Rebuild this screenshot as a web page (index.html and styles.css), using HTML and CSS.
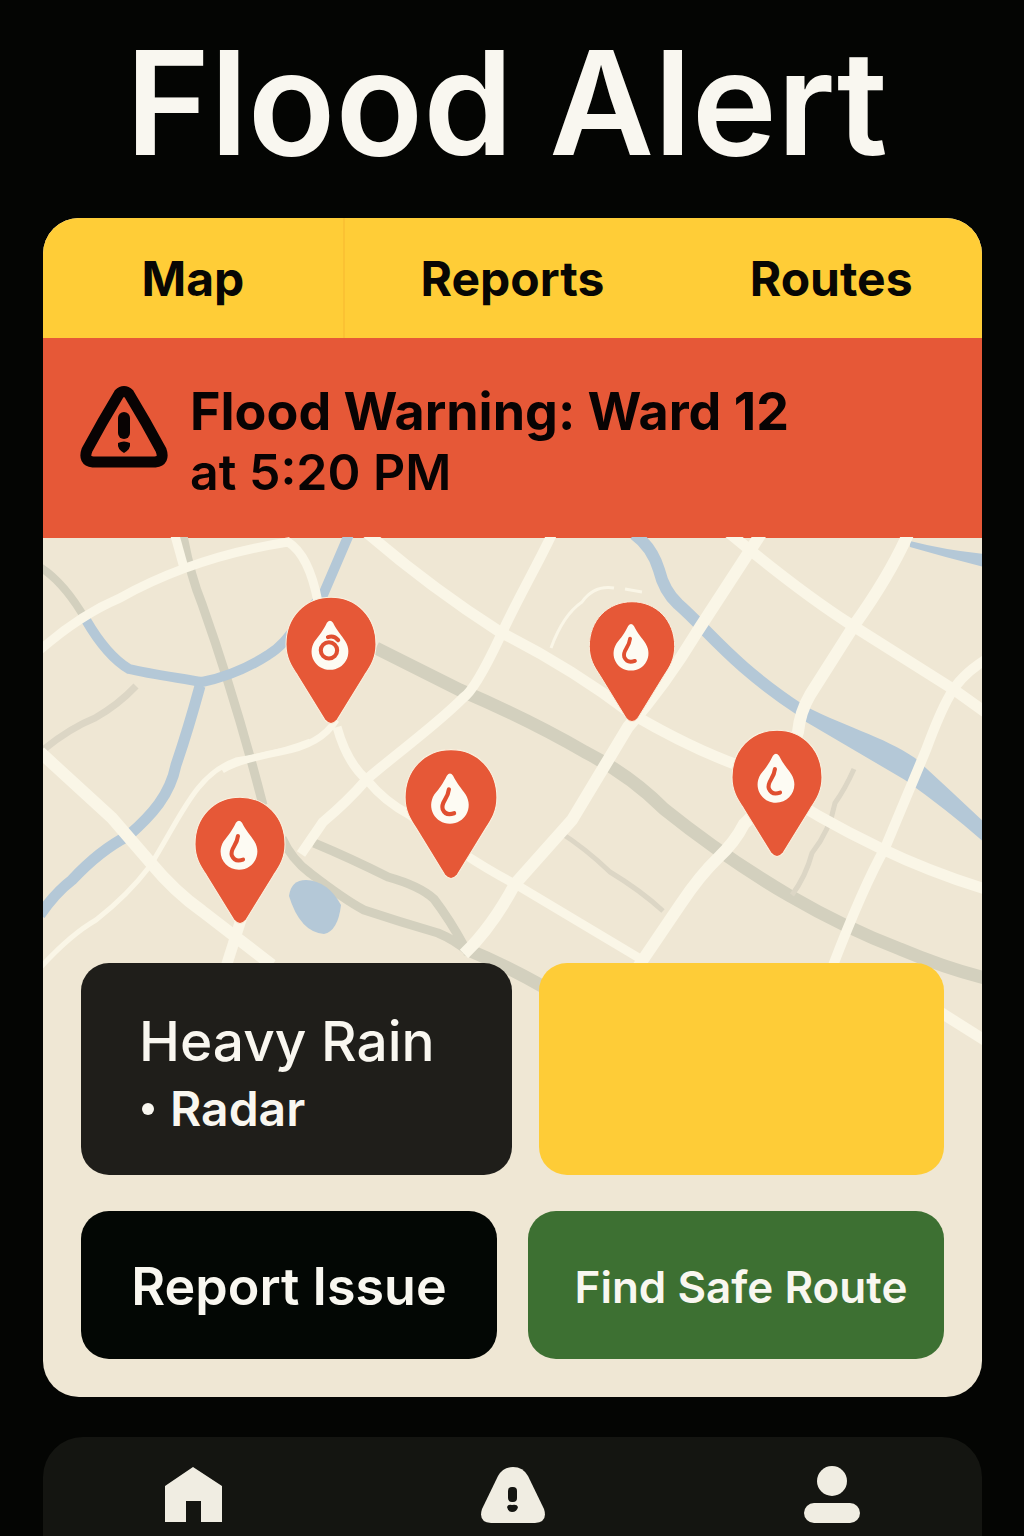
FILE: index.html
```html
<!DOCTYPE html>
<html lang="en">
<head>
<meta charset="utf-8">
<meta name="viewport" content="width=device-width, initial-scale=1">
<title>Flood Alert</title>
<link rel="stylesheet" href="styles.css">
</head>
<body>
<svg class="symbols" aria-hidden="true">
  <symbol id="pin" viewBox="0 0 90 126">
    <path class="pin-body" d="M45 1C20 1 1 20 1 47C1 60 6 68 12 77L39 121Q45 128 51 121L78 77C84 68 89 60 89 47C89 20 70 1 45 1Z"/>
    <path class="pin-drop" d="M41 26Q44 22 47 26C51 34 55 38 59 44C67 57 58 72 44 72C30 72 21 57 29 44C34 38 37 34 41 26Z"/>
  </symbol>
</svg>
<div class="app">
  <h1 class="title">Flood Alert</h1>
  <main class="card">
    <nav class="tabs" aria-label="Sections">
      <a class="tab" href="#map">Map</a>
      <a class="tab" href="#reports">Reports</a>
      <a class="tab" href="#routes">Routes</a>
    </nav>
    <section class="banner" role="alert">
      <svg class="banner-icon" viewBox="0 0 88 82" aria-hidden="true">
        <path fill="none" stroke="currentColor" stroke-width="11" stroke-linejoin="round" d="M39 8Q44 3 49 8Q66 36 81 64Q85 75 75 76H13Q3 75 7 64Q22 36 39 8Z"/>
        <rect x="38" y="26" width="12" height="27" rx="6" fill="currentColor"/>
        <path fill="currentColor" d="M38 57Q44 54 50 57Q51 63 44 67Q37 63 38 57Z"/>
      </svg>
      <div>
        <h2 class="banner-title">Flood Warning: Ward 12</h2>
        <p class="banner-time">at 5:20 PM</p>
      </div>
    </section>
    <section class="scene" id="map">
      <svg class="streets" viewBox="43 537 939 861" preserveAspectRatio="xMidYMin slice" aria-hidden="true">
        <g class="rail">
          <path stroke-width="9" d="M182 530Q190 575 202 604Q236 700 263 805"/>
          <path stroke-width="8" d="M40 567Q64 582 86 620"/>
          <path class="faint" stroke-width="7" d="M43 750Q70 728 95 718Q118 705 136 686"/>
          <path stroke-width="13" d="M376 648Q410 665 460 690Q530 720 585 752Q630 775 664 809Q725 858 790 896Q845 928 900 949Q945 968 985 978"/>
          <path stroke-width="9" d="M314 843Q350 858 388 877Q420 886 434 899Q450 920 464 946"/>
          <path stroke-width="9" d="M282 838Q292 860 310 873Q345 900 364 910Q400 922 438 933Q455 940 470 953"/>
          <path stroke-width="13" d="M466 949Q505 965 542 986"/>
          <path class="faint" stroke-width="5" d="M854 769Q845 789 835 803Q830 830 812 853Q806 876 792 895"/>
          <path class="faint" stroke-width="5" d="M558 831Q585 848 610 872Q640 890 663 911"/>
        </g>
        <g class="river">
          <path stroke-width="10" d="M86 620Q107 656 129 669C150 674 180 678 202 682Q237 675 268 655Q285 645 300 620L323 595L350 532"/>
          <path stroke-width="11" d="M200 686Q188 730 176 765C170 795 152 815 128 836Q100 850 72 880Q55 893 40 915"/>
          <path stroke-width="12" d="M634 534Q652 547 659 570Q664 591 678 604C710 632 732 665 802 711"/>
          <path class="water" d="M799 703C840 725 885 737 915 758Q950 790 986 824V844Q950 812 905 780L796 716Z"/>
          <path class="water" d="M910 541Q945 550 984 554V567Q948 558 910 547Z"/>
        </g>
        <path class="water" d="M289 896Q291 880 306 880Q328 881 341 905Q338 931 324 934Q300 932 289 896Z"/>
        <g class="road">
          <path stroke-width="9" d="M40 650Q80 615 120 598C170 570 225 552 288 542Q309 555 318 602"/>
          <path stroke-width="9" d="M174 532L184 568"/>
          <path stroke-width="12" d="M40 752L112 818L150 862Q175 892 202 911L272 965"/>
          <path stroke-width="5" d="M40 968Q70 935 96 920Q128 895 150 866C182 815 195 775 236 760Q280 753 310 741"/>
          <path stroke-width="7" d="M222 770Q238 760 280 752Q321 745 336 720"/>
          <path stroke-width="9" d="M337 727Q347 763 367 780Q385 802 410 815Q465 858 515 884L644 961"/>
          <path stroke-width="10" d="M553 532C535 570 522 590 500 637Q475 690 463 698C435 726 402 749 367 779Q347 802 323 822L301 854"/>
          <path stroke-width="11" d="M366 532C410 570 450 600 500 632Q570 667 632 714Q690 748 740 766Q805 812 880 848Q930 872 985 889"/>
          <path stroke-width="12" d="M762 532L697 632Q665 685 628 727L572 820L515 884Q492 927 464 954"/>
          <path stroke-width="11" d="M728 532Q800 592 850 624L953 689L985 712"/>
          <path stroke-width="12" d="M909 532Q890 575 855 624L810 695Q800 712 798 732Q779 793 744 824Q735 842 718 858Q700 875 680 905L638 967"/>
          <path stroke-width="10" d="M985 660Q960 676 950 695Q940 712 926 750L885 848Q863 887 832 968"/>
          <path stroke-width="11" d="M244 910L225 970"/>
          <path stroke-width="11" d="M940 1012L986 1041"/>
          <path stroke-width="3" d="M551 648Q563 615 582 602Q594 585 614 588M625 589L642 592"/>
        </g>
      </svg>
      <div class="pins">
        <button class="pin pin-north" type="button" aria-label="Flood report 1"><svg class="pin-art" viewBox="0 0 90 126"><use href="#pin"/><circle class="pin-mark" cx="43" cy="53" r="8"/><path class="pin-mark" d="M42 40Q48 38 52 43"/></svg></button>
        <button class="pin pin-creek" type="button" aria-label="Flood report 2"><svg class="pin-art" viewBox="0 0 90 126"><use href="#pin"/><path class="pin-mark" d="M43 39C42 49 35 51 37 58Q40 65 48 62"/></svg></button>
        <button class="pin pin-center" type="button" aria-label="Flood report 3"><svg class="pin-art" viewBox="0 0 90 126"><use href="#pin"/><path class="pin-mark" d="M43 39C42 49 35 51 37 58Q40 65 48 62"/></svg></button>
        <button class="pin pin-east" type="button" aria-label="Flood report 4"><svg class="pin-art" viewBox="0 0 90 126"><use href="#pin"/><path class="pin-mark" d="M43 39C42 49 35 51 37 58Q40 65 48 62"/></svg></button>
        <button class="pin pin-west" type="button" aria-label="Flood report 5"><svg class="pin-art" viewBox="0 0 90 126"><use href="#pin"/><path class="pin-mark" d="M43 39C42 49 35 51 37 58Q40 65 48 62"/></svg></button>
      </div>
      <div class="panels">
        <div class="tiles">
          <article class="tile tile-rain">
            <h3 class="tile-title">Heavy Rain</h3>
            <p class="tile-note"><span class="dot"></span>Radar</p>
          </article>
          <div class="tile tile-blank"></div>
        </div>
        <div class="actions">
          <button class="action action-report" type="button">Report Issue</button>
          <button class="action action-route" type="button">Find Safe Route</button>
        </div>
      </div>
    </section>
  </main>
  <nav class="dock" aria-label="Main">
    <a class="dock-link" href="#home" aria-label="Home"><svg class="dock-icon" viewBox="0 0 64 58"><path fill="currentColor" d="M32 1L61 20V56H40V35H25V56H4V20Z"/></svg></a>
    <a class="dock-link" href="#alerts" aria-label="Alerts"><svg class="dock-icon" viewBox="0 0 64 58"><path fill="currentColor" d="M32 1Q42 1 47 10L63 43Q67 56 54 57H10Q-3 56 1 43L17 10Q22 1 32 1Z"/><rect class="dock-cut" x="27" y="21" width="9" height="15" rx="4"/><path class="dock-cut" d="M26 41Q27 38 31 39Q36 38 37 41Q36 46 31 46Q27 46 26 41Z"/></svg></a>
    <a class="dock-link" href="#profile" aria-label="Profile"><svg class="dock-icon" viewBox="0 0 64 58"><circle fill="currentColor" cx="32" cy="15" r="15"/><rect fill="currentColor" x="4" y="37" width="56" height="20" rx="10"/></svg></a>
  </nav>
</div>
</body>
</html>
```
FILE: styles.css
```css
* {
  box-sizing: border-box;
}

body {
  margin: 0;
  background: #040503;
  color: #f9f7f0;
  font-family: Inter, "Liberation Sans", sans-serif;
  font-weight: 600;
}

h1, h2, h3, p {
  margin: 0;
  font-weight: inherit;
}

a {
  color: inherit;
  text-decoration: none;
}

button {
  border: 0;
  padding: 0;
  background: none;
  color: inherit;
  font: inherit;
  cursor: pointer;
}

.symbols {
  position: absolute;
  width: 0;
  height: 0;
}

.app {
  min-height: 100vh;
  padding: 0 42px 0 43px;
  display: flex;
  flex-direction: column;
}

.title {
  padding: 13px 12px 25px 0;
  font-size: 144px;
  line-height: 180px;
  text-align: center;
  white-space: nowrap;
}

.card {
  border-radius: 36px;
  overflow: hidden;
  background: #efe7d4;
}

.tabs {
  display: grid;
  grid-template-columns: 302fr 336fr 302fr;
  background: #ffcd37;
  color: #080704;
  font-size: 48px;
  font-weight: 700;
  line-height: 118px;
  text-align: center;
}

.tab {
  padding-top: 2px;
}

.tab:first-child {
  border-right: 2px solid #fbc233;
}

.banner {
  display: flex;
  gap: 22px;
  align-items: flex-start;
  padding: 44px 38px 36px 37px;
  background: #e65837;
  color: #080303;
  line-height: 60px;
}

.banner-icon {
  flex: none;
  width: 88px;
  height: 82px;
  margin-top: 4px;
}

.banner-title {
  font-size: 52px;
  font-weight: 700;
}

.banner-time {
  font-size: 50px;
}

.scene {
  position: relative;
  margin-top: -1px;
}

.streets {
  position: absolute;
  inset: 0;
  width: 100%;
  height: 100%;
  fill: none;
}

.road {
  stroke: #faf6e7;
}

.rail {
  stroke: #d3d0be;
}

.river {
  stroke: #b4c8d7;
}

.faint {
  stroke: #dcd6c5;
}

.water {
  fill: #b4c8d7;
  stroke: none;
}

.pins {
  position: relative;
  aspect-ratio: 939 / 426;
}

.pin {
  position: absolute;
  width: 9.8%;
  transform: translate(-50%, -100%);
}

.pin-art {
  display: block;
  width: 100%;
  overflow: visible;
}

.pin-body {
  fill: #e65837;
  stroke: #faf1df;
  stroke-width: 1;
}

.pin-drop {
  fill: #fdfbf3;
}

.pin-mark {
  fill: none;
  stroke: #e04f30;
  stroke-width: 4;
  stroke-linecap: round;
}

.pin-north { left: 30.7%; top: 44.1%; }
.pin-creek { left: 62.7%; top: 43.6%; width: 9.3%; }
.pin-center { left: 43.4%; top: 80.4%; width: 10%; }
.pin-east { left: 78.2%; top: 75.4%; }
.pin-west { left: 21%; top: 91%; }

.panels {
  position: relative;
  display: grid;
  gap: 36px;
  padding: 0 38px 38px;
}

.tiles {
  display: grid;
  grid-template-columns: 431fr 405fr;
  gap: 27px;
}

.tile {
  min-height: 212px;
  border-radius: 28px;
}

.tile-rain {
  padding: 44px 58px 32px;
  background: #1f1e1a;
}

.tile-title {
  font-size: 55px;
  font-weight: 500;
  line-height: 68px;
}

.tile-note {
  display: flex;
  align-items: center;
  gap: 16px;
  font-size: 48px;
  line-height: 68px;
}

.dot {
  width: 12px;
  height: 12px;
  margin-left: 3px;
  border-radius: 50%;
  background: #f9f7f0;
}

.tile-blank {
  background: #fecc37;
}

.actions {
  display: grid;
  grid-template-columns: 1fr 1fr;
  gap: 31px;
}

.action {
  min-height: 148px;
  padding-top: 4px;
  border-radius: 28px;
  font-size: 52px;
  line-height: 60px;
}

.action-report {
  background: #030704;
}

.action-route {
  padding-left: 10px;
  background: #3d7032;
  font-size: 44px;
}

.dock {
  flex: 1;
  display: flex;
  justify-content: space-between;
  align-items: flex-start;
  margin-top: 40px;
  padding: 29px 118px 0;
  border-radius: 40px 40px 0 0;
  background: #141511;
  color: #f0ede2;
}

.dock-icon {
  display: block;
  width: 64px;
  height: 58px;
}

.dock-cut {
  fill: #141511;
}
```
